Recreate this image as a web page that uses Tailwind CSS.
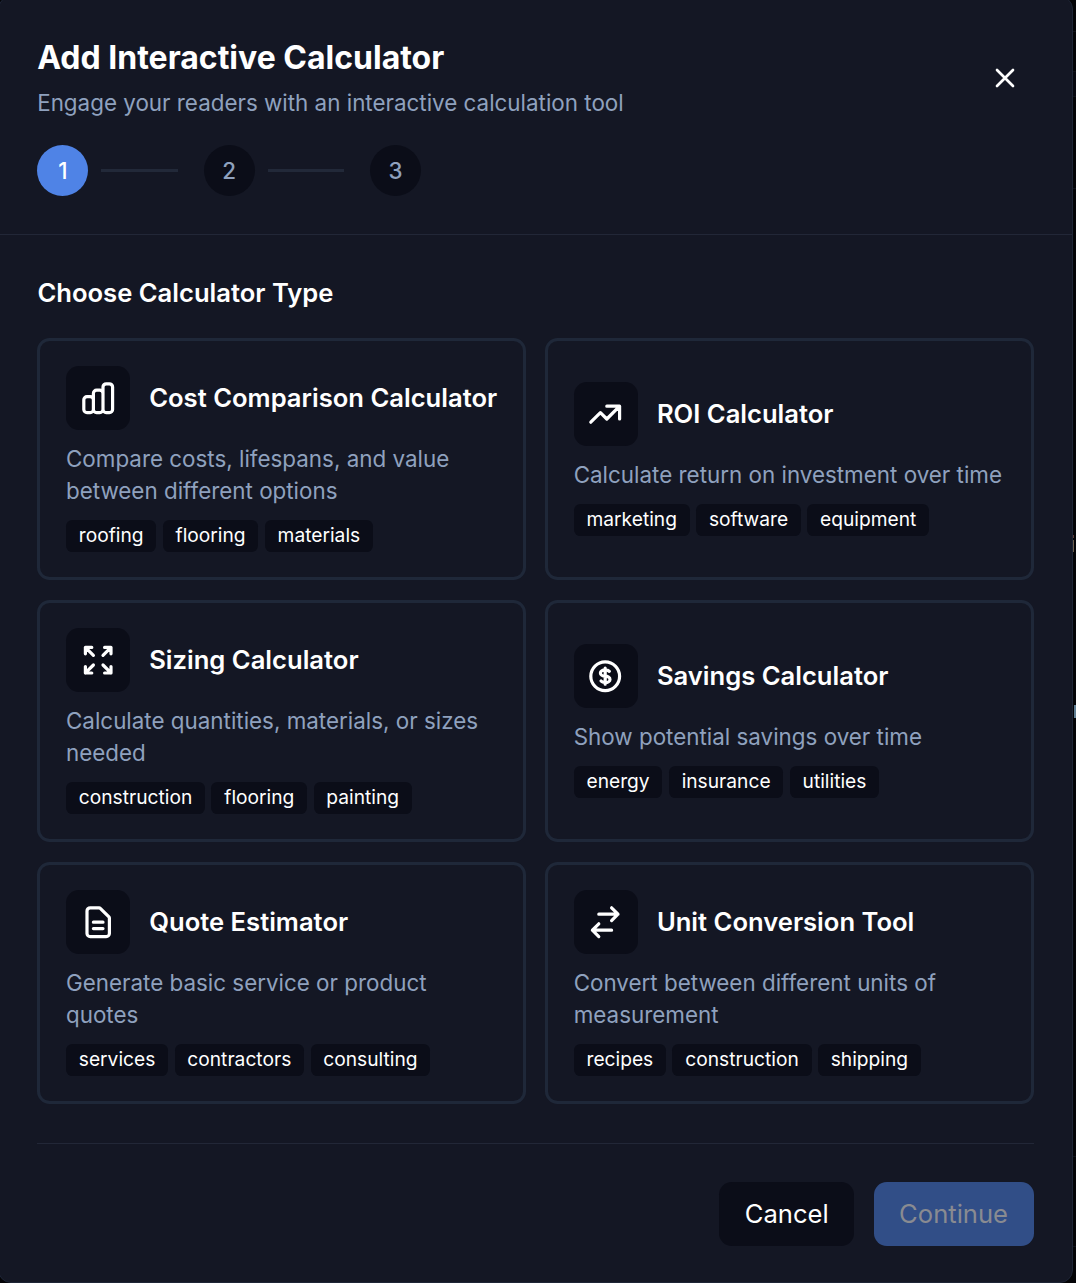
<!DOCTYPE html>
<html lang="en">
<head>
  <meta charset="UTF-8" />
  <meta name="viewport" content="width=device-width, initial-scale=1.0" />
  <title>Add Interactive Calculator</title>
  <script src="https://cdn.jsdelivr.net/npm/@tailwindcss/browser@4"></script>
</head>
<body class="relative h-[1283px] overflow-hidden bg-[#040407] font-['Inter',sans-serif] text-white">
  <!-- page behind the dialog -->
  <div class="absolute right-0 top-0 h-full w-[3px]">
    <div class="absolute top-[31px] h-px w-full bg-[#10121a]"></div>
    <div class="absolute top-[71px] h-[26px] w-full border-y border-[#10121a] bg-[#070810]"></div>
    <div class="absolute top-[188px] h-px w-full bg-[#10121a]"></div>
    <div class="absolute top-[535px] h-[3px] w-px bg-[#5d3a35]"></div>
    <div class="absolute top-[540px] h-[12px] w-px bg-[#6b5c4c]"></div>
    <div class="absolute right-0 top-[705px] h-[13px] w-[2px] bg-[#5f7d92]"></div>
    <div class="absolute top-[1156px] h-px w-full bg-[#10121a]"></div>
    <div class="absolute top-[1246px] h-px w-full bg-[#10121a]"></div>
  </div>

  <div class="relative -ml-[2px] -mt-[4px] h-[1287px] w-[1075px] rounded-[13px] border border-[#1e2536] bg-[#141724]">
    <div class="flex h-[238px] items-start justify-between border-b border-[#222737] pl-[38.2px] pr-[38.4px] pt-[39.2px]">
      <div>
        <h2 class="text-[32px] font-bold leading-[44.8px]">Add Interactive Calculator</h2>
        <p class="mt-[6.4px] text-[22.4px] leading-[32px] text-[#8fa1be]">Engage your readers with an interactive calculation tool</p>
        <div class="mt-[25.6px] flex items-center text-[22.4px] font-medium">
          <div class="flex size-[51.2px] items-center justify-center rounded-full bg-[#4f83e6]">1</div>
          <div class="ml-[12.8px] mr-[25.6px] h-[3px] w-[76.8px] bg-[#222939]"></div>
          <div class="flex size-[51.2px] items-center justify-center rounded-full bg-[#0b0d18] text-[#8fa1be]">2</div>
          <div class="ml-[12.8px] mr-[25.6px] h-[3px] w-[76.8px] bg-[#222939]"></div>
          <div class="flex size-[51.2px] items-center justify-center rounded-full bg-[#0b0d18] text-[#8fa1be]">3</div>
        </div>
      </div>
      <button class="mt-[13px] flex size-[57.6px] items-center justify-center" aria-label="Close">
        <svg class="size-[32px]" viewBox="0 0 24 24" fill="none" stroke="currentColor" stroke-width="2" stroke-linecap="round" stroke-linejoin="round"><path d="M18 6 6 18M6 6l12 12" /></svg>
      </button>
    </div>

    <div class="px-[38.4px] pt-[39.2px]">
      <h3 class="text-[25.6px] font-semibold leading-[38.4px]">Choose Calculator Type</h3>
      <div id="types" class="mt-[25.6px] grid grid-cols-2 gap-x-[19.2px] gap-y-[20px]"></div>
      <div class="mt-[38.4px] flex justify-end gap-[19.2px] border-t border-[#222737] pt-[38.4px] text-[25.6px]">
        <button class="h-[64px] rounded-[12.8px] bg-[#0b0d18] px-[25.6px]">Cancel</button>
        <button class="h-[64px] rounded-[12.8px] bg-[#314e87] px-[25.6px] text-[#898b91]" disabled>Continue</button>
      </div>
    </div>
  </div>

  <script>
    const types = [
      {
        name: 'Cost Comparison Calculator',
        desc: 'Compare costs, lifespans, and value between different options',
        tags: ['roofing', 'flooring', 'materials'],
        icon: 'M9 19v-6a2 2 0 00-2-2H5a2 2 0 00-2 2v6a2 2 0 002 2h2a2 2 0 002-2zm0 0V9a2 2 0 012-2h2a2 2 0 012 2v10m-6 0a2 2 0 002 2h2a2 2 0 002-2m0 0V5a2 2 0 012-2h2a2 2 0 012 2v14a2 2 0 01-2 2h-2a2 2 0 01-2-2z'
      },
      {
        name: 'ROI Calculator',
        desc: 'Calculate return on investment over time',
        tags: ['marketing', 'software', 'equipment'],
        icon: 'M13 7h8m0 0v8m0-8l-8 8-4-4-6 6'
      },
      {
        name: 'Sizing Calculator',
        desc: 'Calculate quantities, materials, or sizes needed',
        tags: ['construction', 'flooring', 'painting'],
        icon: 'M4 8V4m0 0h4M4 4l5 5m11-1V4m0 0h-4m4 0l-5 5M4 16v4m0 0h4m-4 0l5-5m11 5l-5-5m5 5v-4m0 4h-4'
      },
      {
        name: 'Savings Calculator',
        desc: 'Show potential savings over time',
        tags: ['energy', 'insurance', 'utilities'],
        icon: 'M12 8c-1.657 0-3 .895-3 2s1.343 2 3 2 3 .895 3 2-1.343 2-3 2m0-8c1.11 0 2.08.402 2.599 1M12 8V7m0 1v8m0 0v1m0-1c-1.11 0-2.08-.402-2.599-1M21 12a9 9 0 11-18 0 9 9 0 0118 0z'
      },
      {
        name: 'Quote Estimator',
        desc: 'Generate basic service or product quotes',
        tags: ['services', 'contractors', 'consulting'],
        icon: 'M9 12h6m-6 4h6m2 5H7a2 2 0 01-2-2V5a2 2 0 012-2h5.586a1 1 0 01.707.293l5.414 5.414a1 1 0 01.293.707V19a2 2 0 01-2 2z'
      },
      {
        name: 'Unit Conversion Tool',
        desc: 'Convert between different units of measurement',
        tags: ['recipes', 'construction', 'shipping'],
        icon: 'M8 7h12m0 0l-4-4m4 4l-4 4m0 6H4m0 0l4 4m-4-4l4-4'
      }
    ];

    document.getElementById('types').innerHTML = types.map(t => `
      <button class="flex h-[242px] flex-col justify-center rounded-[12.8px] border-[3px] border-[#1f2839] px-[25.6px] text-left">
        <div class="flex items-center gap-[19.2px]">
          <div class="flex size-[64px] shrink-0 items-center justify-center rounded-[12.8px] bg-[#0b0d18]">
            <svg class="size-[38.4px]" viewBox="0 0 24 24" fill="none" stroke="currentColor" stroke-width="2" stroke-linecap="round" stroke-linejoin="round"><path d="${t.icon}" /></svg>
          </div>
          <h4 class="whitespace-nowrap text-[25.6px] font-semibold leading-[38.4px]">${t.name}</h4>
        </div>
        <p class="mt-[12.8px] text-[22.4px] leading-[32px] text-[#8fa1be]">${t.desc}</p>
        <div class="mt-[12.8px] flex gap-[6.4px]">
          ${t.tags.map(tag => `<span class="rounded-[6.4px] bg-[#0b0d18] px-[12.8px] py-[3.2px] text-[19.2px] leading-[25.6px]">${tag}</span>`).join('')}
        </div>
      </button>`).join('');
  </script>
</body>
</html>
